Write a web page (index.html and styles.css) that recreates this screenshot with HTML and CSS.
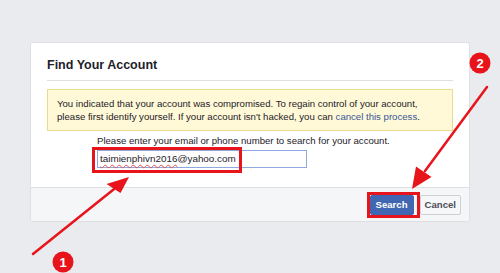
FILE: index.html
```html
<!DOCTYPE html>
<html>
<head>
<meta charset="utf-8">
<link rel="stylesheet" href="styles.css">
</head>
<body>
<div class="card">
  <div class="head"><h2 class="title">Find Your Account</h2></div>
  <div class="body">
    <p class="notice">You indicated that your account was compromised. To regain control of your account, please first identify yourself. If your account isn't hacked, you can <a class="link">cancel this process</a>.</p>
    <div class="form">
      <div class="label">Please enter your email or phone number to search for your account.</div>
      <div class="input"><span class="spell">taimienphivn2016</span>@yahoo.com</div>
    </div>
  </div>
  <div class="foot">
    <button class="btn primary">Search</button>
    <button class="btn">Cancel</button>
  </div>
</div>
<svg class="annot" width="500" height="273" viewBox="0 0 500 273">
  <rect x="93.5" y="148.5" width="147" height="23" fill="none" stroke="#e8141c" stroke-width="3"/>
  <rect x="368.5" y="193.5" width="50" height="23" fill="none" stroke="#e8141c" stroke-width="3"/>
  <line x1="33" y1="254" x2="116" y2="187.5" stroke="#e8141c" stroke-width="2.5" stroke-linecap="round"/>
  <polygon points="129,177 120.5,193 106.5,184" fill="#e8141c"/>
  <line x1="487" y1="87" x2="425" y2="171" stroke="#e8141c" stroke-width="2.5" stroke-linecap="round"/>
  <polygon points="412,189 416,166.5 431.5,177" fill="#e8141c"/>
  <circle cx="480" cy="63" r="10.5" fill="#e8141c"/>
  <text x="480" y="67.5" class="num">2</text>
  <circle cx="63" cy="262" r="10.5" fill="#e8141c"/>
  <text x="63" y="266.5" class="num">1</text>
</svg>
</body>
</html>
```
FILE: styles.css
```css
html, body {
  margin: 0;
  padding: 0;
}
body {
  width: 500px;
  height: 273px;
  background: #e9ebee;
  font-family: "Liberation Sans", Arial, sans-serif;
  color: #1d2129;
  position: relative;
  overflow: hidden;
  padding-top: 42px;
  box-sizing: border-box;
}
.card {
  margin-left: 30px;
  width: 440px;
  background: #fff;
  border: 1px solid #dddfe2;
  border-radius: 3px;
  box-sizing: border-box;
}
.head {
  margin: 0 16px;
  padding: 14px 0 7px;
  border-bottom: 1px solid #dddfe2;
}
.title {
  margin: 0;
  font-size: 12.5px;
  line-height: 16px;
  font-weight: bold;
  color: #1d2129;
}
.body {
  padding: 8px 16px 19px;
}
.notice {
  margin: 0;
  background: #fff9d7;
  border: 1px solid #ecdc8a;
  padding: 7px 9px;
  font-size: 9.6px;
  line-height: 13px;
  color: #1d2129;
}
.link {
  color: #365899;
}
.form {
  padding-left: 50px;
  margin-top: 3px;
}
.label {
  font-size: 9.6px;
  line-height: 13px;
}
.input {
  margin-top: 3px;
  width: 210px;
  height: 18px;
  box-sizing: border-box;
  border: 1px solid #8fa8dd;
  padding: 0 2px;
  font-size: 9.9px;
  line-height: 16px;
  color: #1d2129;
}
.spell {
  text-decoration: underline wavy #e05050;
  text-decoration-thickness: 1px;
  text-underline-offset: 2px;
}
.foot {
  display: flex;
  justify-content: flex-end;
  gap: 6px;
  padding: 7px 8px 6px;
  background: #f5f6f7;
  border-top: 1px solid #dddfe2;
  border-radius: 0 0 3px 3px;
}
.btn {
  height: 20px;
  margin: 0;
  padding: 0 4px;
  font-family: "Liberation Sans", Arial, sans-serif;
  font-size: 9.6px;
  font-weight: bold;
  line-height: 18px;
  border: 1px solid #ced0d4;
  border-radius: 2px;
  background: #f6f7f9;
  color: #4b4f56;
}
.primary {
  background: #4267b2;
  border-color: #4267b2;
  color: #fff;
  padding: 0 5px;
}
.annot {
  position: absolute;
  left: 0;
  top: 0;
  pointer-events: none;
}
.num {
  fill: #fff;
  font-family: "Liberation Sans", Arial, sans-serif;
  font-weight: bold;
  font-size: 13px;
  text-anchor: middle;
}
```
